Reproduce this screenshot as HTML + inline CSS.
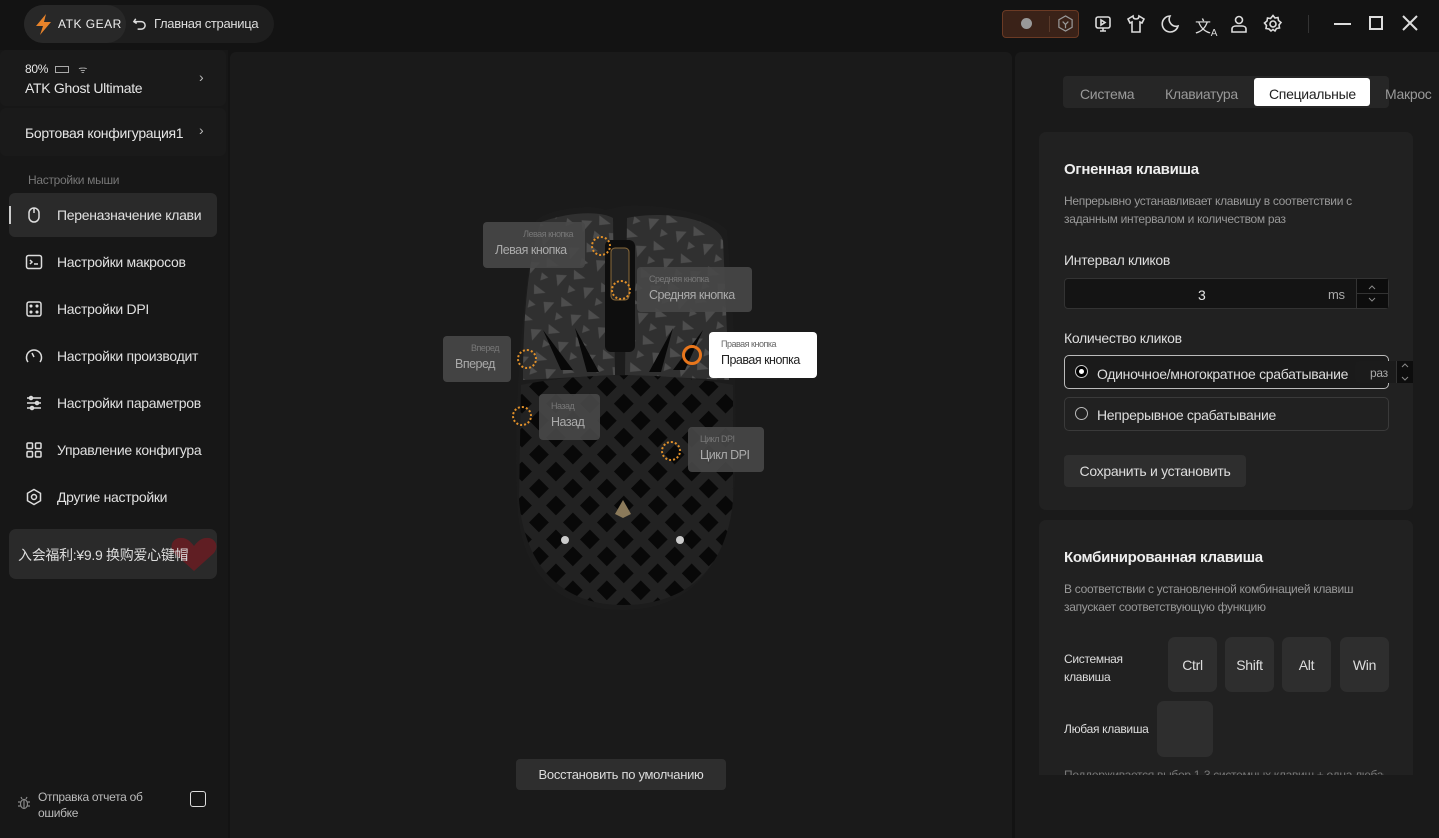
<!DOCTYPE html>
<html><head><meta charset="utf-8"><style>
*{box-sizing:border-box;margin:0;padding:0}
body{width:1439px;height:838px;background:#131313;font-family:"Liberation Sans","Noto Sans CJK SC",sans-serif;color:#e6e6e6;position:relative;overflow:hidden;font-size:14px;letter-spacing:-0.3px}
.abs{position:absolute}
.side{left:0;top:50px;width:228px;height:788px;background:#171717}
.card{background:#1c1c1c;border-radius:6px}
.nav{left:9px;width:208px;height:44px;display:flex;align-items:center;padding-left:16px;font-size:14px;color:#e0e0e0;white-space:nowrap;overflow:hidden}
.nav svg{width:18px;height:18px;margin-right:14px;stroke:#ddd;fill:none;stroke-width:1.5;flex:none}
.lbl{background:rgba(72,72,72,.9);border-radius:4px;padding:7px 12px 0;color:#aaa;font-size:12.5px;white-space:nowrap;letter-spacing:-0.5px}
.lbl small{display:block;font-size:9px;color:#777;text-align:right;margin-bottom:4px}
.dot{width:20px;height:20px;border:2px dotted #e0902a;border-radius:50%}
.key{width:49px;height:55px;background:#2e2e2e;border-radius:7px;display:flex;align-items:center;justify-content:center;font-size:14px;color:#ddd}
.ic{stroke:#ddd;fill:none;stroke-width:1.6}
</style></head><body>
<!-- title bar -->
<div class="abs" style="left:24px;top:5px;width:250px;height:38px;background:#1e1e1e;border-radius:19px"></div>
<div class="abs" style="left:24px;top:5px;width:102px;height:38px;background:#282828;border-radius:19px"></div>
<svg class="abs" style="left:31px;top:12px" width="24" height="24" viewBox="0 0 24 24"><path d="M15 2L5 14h7l-3 9 11-13h-7z" fill="#e8832a"/></svg>
<div class="abs" style="left:58px;top:17px;font-size:12px;letter-spacing:0.5px;color:#eee">ATK GEAR</div>
<svg class="abs ic" style="left:132px;top:16px" width="15" height="15" viewBox="0 0 16 16"><path d="M4 3L2 6l3 2M2 6h8a4 4 0 010 8H6"/></svg>
<div class="abs" style="left:154px;top:16px;font-size:13px;color:#ddd">Главная страница</div>
<div class="abs" style="left:1002px;top:10px;width:77px;height:28px;background:#3a2218;border:1px solid #6b3a24;border-radius:4px"></div>
<div class="abs" style="left:1021px;top:18px;width:11px;height:11px;border-radius:50%;background:#999"></div>
<div class="abs" style="left:1049px;top:16px;width:1px;height:16px;background:#5a3a2a"></div>
<svg class="abs" style="left:1057px;top:15px" width="17" height="17" viewBox="0 0 18 18"><path d="M9 1l7 4v8l-7 4-7-4V5z M6 7l3 3 3-3 M9 10v4" stroke="#999" fill="none" stroke-width="1.3"/></svg>
<svg class="abs ic" style="left:1093px;top:14px" width="20" height="20" viewBox="0 0 20 20"><rect x="3" y="3" width="14" height="11" rx="2"/><path d="M8 6v5l4-2.5z M10 14v3 M7 17h6"/></svg>
<svg class="abs ic" style="left:1126px;top:14px" width="20" height="20" viewBox="0 0 20 20"><path d="M7 2L2 5l2 4 2-1v10h8V8l2 1 2-4-5-3c0 2-1 3-3 3S7 4 7 2z"/></svg>
<svg class="abs ic" style="left:1161px;top:14px" width="20" height="20" viewBox="0 0 20 20"><path d="M9 2a8 8 0 108 10A7 7 0 019 2z"/></svg>
<div class="abs" style="left:1195px;top:13px;font-size:16px;color:#ddd">文<sub style="font-size:10px">A</sub></div>
<svg class="abs ic" style="left:1229px;top:14px" width="20" height="20" viewBox="0 0 20 20"><circle cx="10" cy="6" r="3.5"/><path d="M3 18v-3c0-2 2-3 4-3h6c2 0 4 1 4 3v3z"/></svg>
<svg class="abs ic" style="left:1263px;top:14px" width="20" height="20" viewBox="0 0 20 20"><circle cx="10" cy="10" r="3"/><path d="M10 1.5l2 2.5 3-.5.5 3 2.5 2-2 2.5.5 3-3 .5-1.5 2.5-2-1.5-2 1.5L6 15l-3-.5.5-3-2-2.5 2.5-2 .5-3 3 .5z"/></svg>
<div class="abs" style="left:1308px;top:15px;width:1px;height:18px;background:#333"></div>
<div class="abs" style="left:1334px;top:23px;width:17px;height:2px;background:#ddd"></div>
<div class="abs" style="left:1369px;top:16px;width:14px;height:14px;border:2px solid #ddd"></div>
<svg class="abs" style="left:1402px;top:15px" width="16" height="16"><path d="M1 1l14 14M15 1L1 15" stroke="#ddd" stroke-width="2"/></svg>

<!-- sidebar -->
<div class="abs side"></div>
<div class="abs card" style="left:0;top:50px;width:226px;height:56px;background:#1a1a1a"></div>
<div class="abs" style="left:25px;top:62px;font-size:12px">80% <span style="display:inline-block;width:14px;height:7px;border:1px solid #aaa;vertical-align:middle;margin-left:4px"></span> <span style="font-size:10px;color:#aaa;margin-left:6px">ᯤ</span></div>
<div class="abs" style="left:25px;top:80px;font-size:14px">ATK Ghost Ultimate</div>
<div class="abs" style="left:199px;top:69px;color:#bbb">›</div>
<div class="abs card" style="left:0;top:108px;width:226px;height:48px;background:#1a1a1a"></div>
<div class="abs" style="left:25px;top:125px;font-size:14px">Бортовая конфигурация1</div>
<div class="abs" style="left:199px;top:122px;color:#bbb">›</div>
<div class="abs" style="left:28px;top:173px;font-size:12px;color:#777">Настройки мыши</div>
<div class="abs" style="left:9px;top:193px;width:208px;height:44px;background:#2a2a2a;border-radius:6px"></div>
<div class="abs" style="left:9px;top:206px;width:2px;height:18px;background:#ccc"></div>
<div class="abs nav" style="top:193px"><svg viewBox="0 0 18 18"><rect x="4" y="2" width="10" height="14" rx="5"/><path d="M9 2v5"/></svg>Переназначение клави</div>
<div class="abs nav" style="top:240px"><svg viewBox="0 0 18 18"><rect x="1.5" y="2.5" width="15" height="13" rx="2"/><path d="M5 7l2 2-2 2M9 11h4"/></svg>Настройки макросов</div>
<div class="abs nav" style="top:287px"><svg viewBox="0 0 18 18"><rect x="2" y="2" width="14" height="14" rx="2"/><circle cx="6" cy="6" r=".8"/><circle cx="12" cy="12" r=".8"/><circle cx="12" cy="6" r=".8"/><circle cx="6" cy="12" r=".8"/></svg>Настройки DPI</div>
<div class="abs nav" style="top:334px"><svg viewBox="0 0 18 18"><path d="M3 15A7.5 7.5 0 1115 15"/><path d="M9 10L7 6"/></svg>Настройки производит</div>
<div class="abs nav" style="top:381px"><svg viewBox="0 0 18 18"><path d="M2 4h14M2 9h14M2 14h14"/><circle cx="6" cy="4" r="1.5"/><circle cx="12" cy="9" r="1.5"/><circle cx="7" cy="14" r="1.5"/></svg>Настройки параметров</div>
<div class="abs nav" style="top:428px"><svg viewBox="0 0 18 18"><rect x="2" y="2" width="5.5" height="5.5" rx="1"/><rect x="10.5" y="2" width="5.5" height="5.5" rx="1"/><rect x="2" y="10.5" width="5.5" height="5.5" rx="1"/><rect x="10.5" y="10.5" width="5.5" height="5.5" rx="1"/></svg>Управление конфигура</div>
<div class="abs nav" style="top:475px"><svg viewBox="0 0 18 18"><circle cx="9" cy="9" r="2.5"/><path d="M9 1.5l6.5 3.75v7.5L9 16.5l-6.5-3.75v-7.5z"/></svg>Другие настройки</div>
<div class="abs" style="left:9px;top:529px;width:208px;height:50px;background:#2a2a2a;border-radius:7px"></div>
<svg class="abs" style="left:170px;top:537px" width="48" height="36" viewBox="0 0 48 36"><path d="M24 34L4 16C-2 8 4 0 12 1c5 0 9 4 12 8 3-4 7-8 12-8 8-1 14 7 8 15z" fill="#6a1c22" opacity=".85"/></svg>
<div class="abs" style="left:18px;top:545px;font-size:14px;color:#ddd">入会福利:¥9.9 换购爱心键帽</div>
<svg class="abs" style="left:17px;top:796px" width="14" height="14" viewBox="0 0 14 14" fill="none" stroke="#888" stroke-width="1.2"><ellipse cx="7" cy="8" rx="3.5" ry="4.5"/><path d="M1 6h2.5M10.5 6H13M1 10h2.5M10.5 10H13M5 3l-1-2M9 3l1-2M7 4v8"/></svg>
<div class="abs" style="left:38px;top:789px;font-size:12px;color:#bbb;line-height:16px">Отправка отчета об<br>ошибке</div>
<div class="abs" style="left:190px;top:791px;width:16px;height:16px;border:1.6px solid #ddd;border-radius:3px"></div>

<!-- center -->
<div class="abs" style="left:230px;top:52px;width:782px;height:786px;background:#1a1a1a;border-radius:6px 6px 0 0"></div>
<svg class="abs" style="left:505px;top:200px" width="235" height="412" viewBox="0 0 235 412">
<defs><pattern id="p" width="24" height="24" patternUnits="userSpaceOnUse" patternTransform="rotate(45)"><rect width="24" height="24" fill="#222"/><rect x="5" y="5" width="14" height="14" fill="#080808"/></pattern>
<pattern id="c" width="30" height="30" patternUnits="userSpaceOnUse" patternTransform="rotate(25)"><rect width="30" height="30" fill="#303030"/><path d="M2 4l14 3-10 6zM18 16l10-4-4 14zM4 20l8 2-6 6z" fill="#4d4d4d"/></pattern></defs>
<path d="M30 22C40 8 90 4 100 10L118 6C140 4 200 8 222 30C230 120 232 200 230 280C226 360 190 410 118 410C40 410 14 360 12 300C8 200 18 100 30 22Z" fill="#1c1c1c"/>
<path d="M36 22C70 10 98 12 108 18L110 175 18 180C18 100 26 50 36 22Z" fill="url(#c)"/>
<path d="M122 18C160 10 210 18 218 40L224 180 120 175Z" fill="url(#c)"/>
<path d="M16 185C80 172 160 172 228 185L228 300C222 370 180 405 118 405C60 405 20 370 14 300Z" fill="url(#p)"/>
<rect x="100" y="40" width="30" height="112" rx="6" fill="#0e0e0e"/>
<rect x="106" y="48" width="18" height="52" rx="4" fill="#262626" stroke="#8b6a3a" stroke-width="1"/>
<path d="M38 130l18 40h12zM70 128l12 44h12zM168 128l-12 44h-12zM198 130l-18 40h-12z" fill="#080808"/>
<path d="M118 300l8 14-8 4-8-4z" fill="#8b7a5a"/>
<circle cx="60" cy="340" r="4" fill="#ccc"/><circle cx="175" cy="340" r="4" fill="#ccc"/>
</svg>
<div class="abs dot" style="left:591px;top:236px"></div>
<div class="abs dot" style="left:611px;top:280px"></div>
<div class="abs dot" style="left:517px;top:349px"></div>
<div class="abs dot" style="left:512px;top:406px"></div>
<div class="abs dot" style="left:661px;top:441px"></div>
<div class="abs" style="left:682px;top:345px;width:20px;height:20px;border:3px solid #e8761c;border-radius:50%"></div>
<div class="abs lbl" style="left:483px;top:222px;width:102px;height:46px"><small>Левая кнопка</small>Левая кнопка</div>
<div class="abs lbl" style="left:637px;top:267px;width:115px;height:45px"><small style="text-align:left">Средняя кнопка</small>Средняя кнопка</div>
<div class="abs lbl" style="left:443px;top:336px;width:68px;height:46px"><small>Вперед</small>Вперед</div>
<div class="abs lbl" style="left:539px;top:394px;width:61px;height:46px"><small style="text-align:left">Назад</small>Назад</div>
<div class="abs lbl" style="left:688px;top:427px;width:76px;height:45px"><small style="text-align:left">Цикл DPI</small>Цикл DPI</div>
<div class="abs lbl" style="left:709px;top:332px;width:108px;height:46px;background:#fff;color:#222"><small style="text-align:left;color:#666">Правая кнопка</small>Правая кнопка</div>
<div class="abs" style="left:516px;top:759px;width:210px;height:31px;background:#2e2e2e;border-radius:4px;font-size:13px;color:#ddd;text-align:center;line-height:31px">Восстановить по умолчанию</div>

<!-- right -->
<div class="abs" style="left:1015px;top:52px;width:424px;height:786px;background:#1a1a1a;border-radius:6px 0 0 0"></div>
<div class="abs" style="left:1063px;top:76px;width:326px;height:32px;background:#262626;border-radius:4px"></div>
<div class="abs" style="left:1254px;top:78px;width:116px;height:28px;background:#fff;border-radius:3px"></div>
<div class="abs" style="left:1080px;top:86px;color:#999;font-size:14px">Система</div>
<div class="abs" style="left:1165px;top:86px;color:#999;font-size:14px">Клавиатура</div>
<div class="abs" style="left:1269px;top:86px;color:#222;font-size:14px">Специальные</div>
<div class="abs" style="left:1385px;top:86px;color:#999;font-size:14px">Макрос</div>

<div class="abs" style="left:1039px;top:132px;width:374px;height:378px;background:#212121;border-radius:7px"></div>
<div class="abs" style="left:1064px;top:161px;font-size:15px;font-weight:bold;color:#eee">Огненная клавиша</div>
<div class="abs" style="left:1064px;top:192px;font-size:12px;color:#999;line-height:18px">Непрерывно устанавливает клавишу в соответствии с<br>заданным интервалом и количеством раз</div>
<div class="abs" style="left:1064px;top:252px;font-size:14px;color:#ddd">Интервал кликов</div>
<div class="abs" style="left:1064px;top:278px;width:325px;height:31px;background:#141414;border:1px solid #333;border-radius:4px"></div>
<div class="abs" style="left:1198px;top:287px;font-size:14px">3</div>
<div class="abs" style="left:1328px;top:287px;font-size:13px;color:#aaa">ms</div>
<div class="abs" style="left:1356px;top:279px;width:32px;height:29px;border-left:1px solid #333;background:#0d0d0d"></div>
<div class="abs" style="left:1356px;top:293px;width:32px;height:1px;background:#333"></div>
<svg class="abs" style="left:1367px;top:283px" width="10" height="22"><path d="M2 6l3-3 3 3M2 15l3 3 3-3" stroke="#888" fill="none"/></svg>
<div class="abs" style="left:1064px;top:330px;font-size:14px;color:#ddd">Количество кликов</div>
<div class="abs" style="left:1064px;top:355px;width:325px;height:34px;border:1px solid #bbb;border-radius:5px;background:#1a1a1a"></div>
<div class="abs" style="left:1075px;top:365px;width:13px;height:13px;border-radius:50%;background:#000;border:1px solid #ccc"></div>
<div class="abs" style="left:1079px;top:369px;width:5px;height:5px;border-radius:50%;background:#fff"></div>
<div class="abs" style="left:1097px;top:366px;font-size:14px;color:#ddd;white-space:nowrap">Одиночное/многократное срабатывание</div>
<div class="abs" style="left:1355px;top:361px;width:58px;height:22px;background:#1b1b1b;border-radius:4px"></div>
<div class="abs" style="left:1370px;top:366px;font-size:12px;color:#aaa">раз</div>
<div class="abs" style="left:1396px;top:361px;width:17px;height:22px;background:#0d0d0d;border-left:1px solid #333"></div>
<svg class="abs" style="left:1400px;top:362px" width="10" height="20"><path d="M2 5l3-3 3 3M2 15l3 3 3-3" stroke="#888" fill="none"/></svg>
<div class="abs" style="left:1064px;top:397px;width:325px;height:34px;border:1px solid #3a3a3a;border-radius:5px"></div>
<div class="abs" style="left:1075px;top:407px;width:13px;height:13px;border-radius:50%;border:1.5px solid #bbb"></div>
<div class="abs" style="left:1097px;top:407px;font-size:14px;color:#ddd">Непрерывное срабатывание</div>
<div class="abs" style="left:1064px;top:455px;width:182px;height:32px;background:#2e2e2e;border-radius:4px;font-size:14px;color:#ddd;line-height:32px;text-align:center">Сохранить и установить</div>

<div class="abs" style="left:1039px;top:520px;width:374px;height:255px;background:#212121;border-radius:7px 7px 0 0"></div>
<div class="abs" style="left:1064px;top:549px;font-size:15px;font-weight:bold;color:#eee">Комбинированная клавиша</div>
<div class="abs" style="left:1064px;top:580px;font-size:12px;color:#999;line-height:18px">В соответствии с установленной комбинацией клавиш<br>запускает соответствующую функцию</div>
<div class="abs" style="left:1064px;top:650px;font-size:12px;color:#ddd;line-height:18px">Системная<br>клавиша</div>
<div class="abs key" style="left:1168px;top:637px">Ctrl</div>
<div class="abs key" style="left:1225px;top:637px">Shift</div>
<div class="abs key" style="left:1282px;top:637px">Alt</div>
<div class="abs key" style="left:1340px;top:637px">Win</div>
<div class="abs" style="left:1064px;top:722px;font-size:12px;color:#ddd">Любая клавиша</div>
<div class="abs key" style="left:1157px;top:701px;width:56px;height:56px"></div>
<div class="abs" style="left:1064px;top:767px;width:320px;height:8px;overflow:hidden;font-size:12px;color:#777;white-space:nowrap"><div style="margin-top:1px">Поддерживается выбор 1-3 системных клавиш + одна любая</div></div>
</body></html>
